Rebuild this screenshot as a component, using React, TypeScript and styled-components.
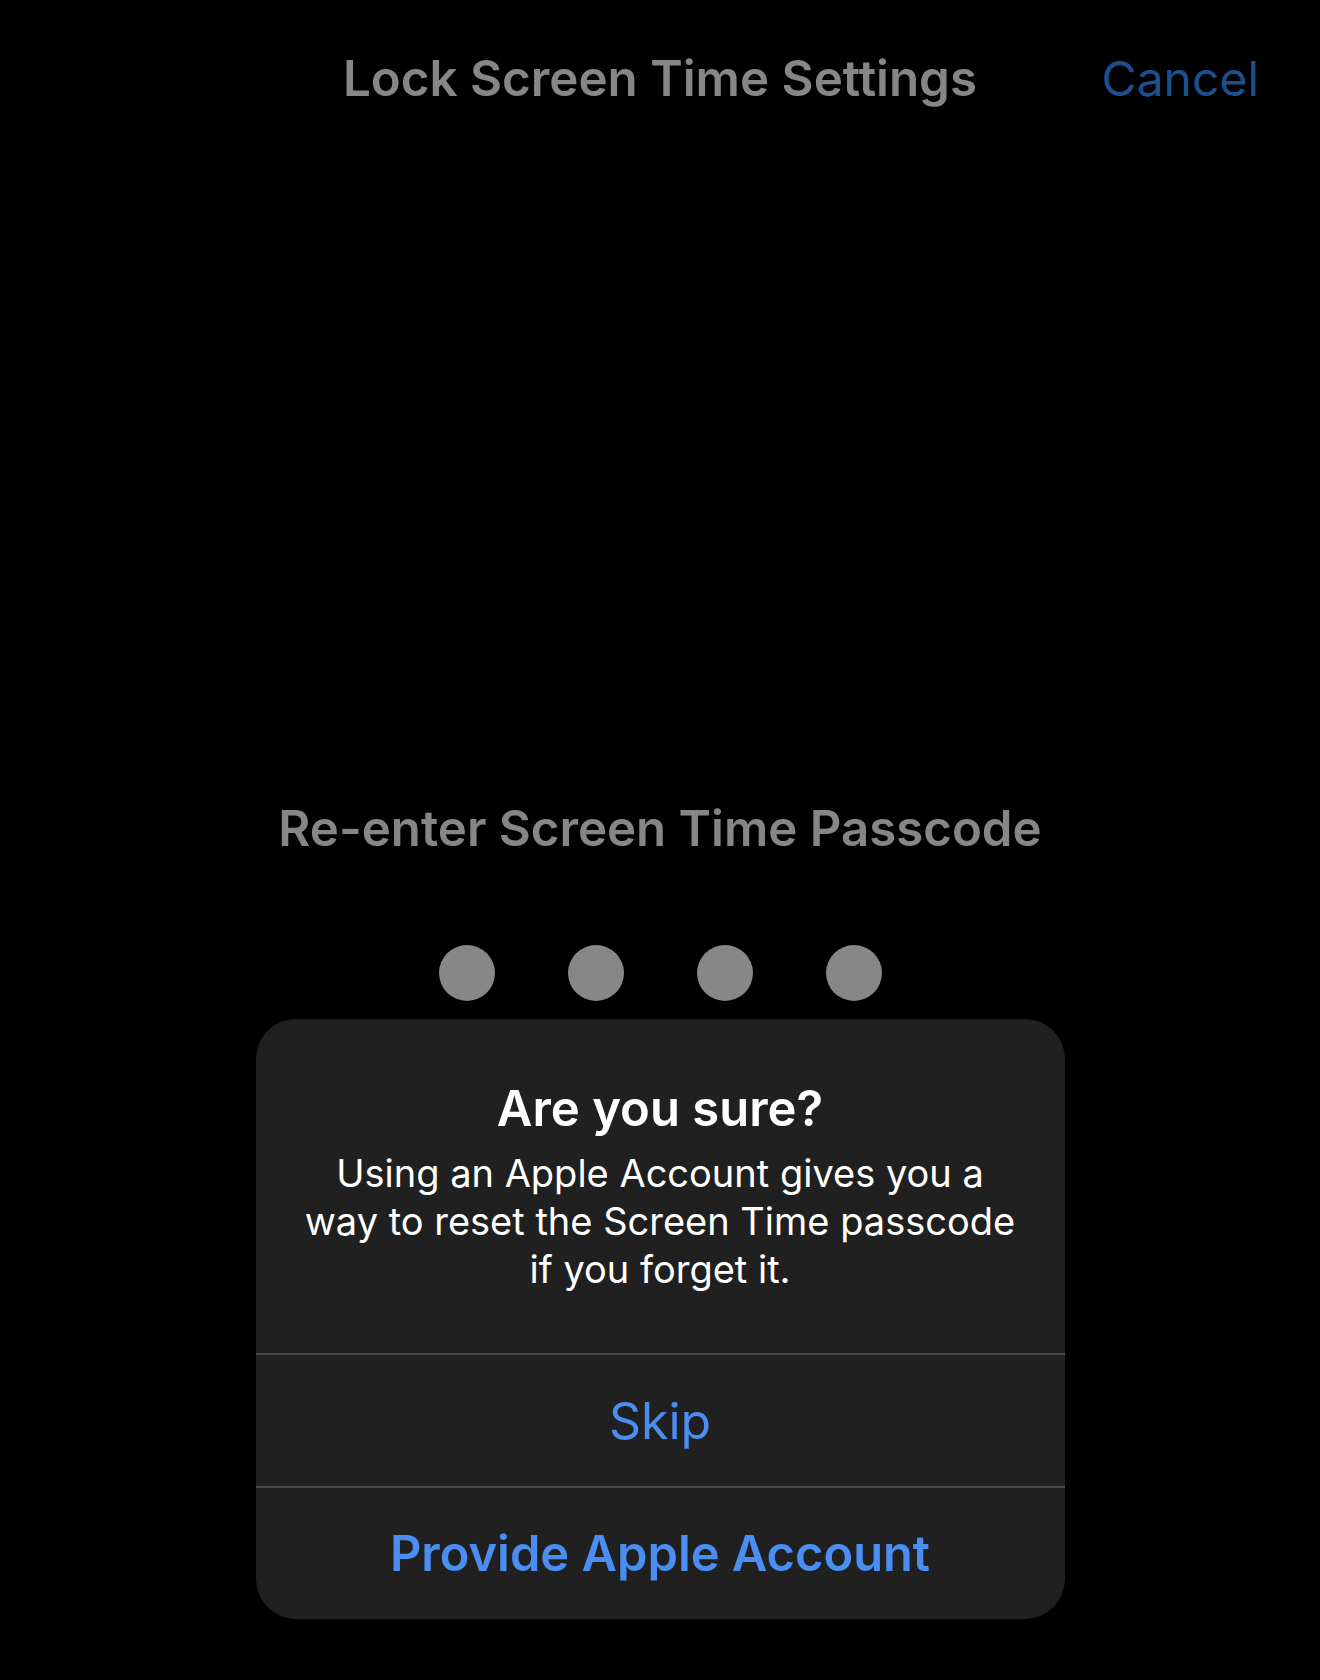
import React from 'react';
import styled, { createGlobalStyle } from 'styled-components';

const GlobalStyle = createGlobalStyle`
  html, body {
    margin: 0;
    padding: 0;
    background: #000;
  }
  body {
    font-family: Inter, "Noto Sans", "Liberation Sans", sans-serif;
    -webkit-font-smoothing: antialiased;
  }
`;

const Screen = styled.div`
  width: 1320px;
  height: 1680px;
  background: #000;
  display: flex;
  flex-direction: column;
  align-items: center;
  overflow: hidden;
`;

const NavBar = styled.header`
  width: 100%;
  height: 156px;
  display: grid;
  grid-template-columns: 1fr auto 1fr;
  align-items: center;
  box-sizing: border-box;
  padding: 0 61px;
`;

const NavTitle = styled.div`
  grid-column: 2;
  font-size: 49.3px;
  font-weight: 600;
  color: #868686;
  white-space: nowrap;
`;

const NavAction = styled.div`
  grid-column: 3;
  justify-self: end;
  font-size: 48px;
  font-weight: 400;
  color: #1d4f8d;
`;

const Prompt = styled.div`
  margin-top: 642px;
  height: 60px;
  line-height: 60px;
  font-size: 49.2px;
  font-weight: 600;
  color: #868686;
  white-space: nowrap;
`;

const Dots = styled.div`
  margin-top: 87px;
  display: flex;
  gap: 73px;
`;

const Dot = styled.span`
  width: 56px;
  height: 56px;
  border-radius: 50%;
  background: #878787;
`;

const Alert = styled.div`
  margin-top: 18px;
  width: 809px;
  border-radius: 40px;
  background: #202020;
  overflow: hidden;
  display: flex;
  flex-direction: column;
`;

const AlertBody = styled.div`
  padding: 60px 20px 60px;
  text-align: center;
  color: #fff;
`;

const AlertTitle = styled.div`
  font-size: 49px;
  font-weight: 600;
  line-height: 60px;
  margin-bottom: 10px;
`;

const AlertMessage = styled.div`
  font-size: 38px;
  font-weight: 400;
  line-height: 48px;
  white-space: nowrap;
`;

const AlertButton = styled.button<{ $primary?: boolean }>`
  height: 133px;
  border: none;
  border-top: 2px solid #4a4a4a;
  background: transparent;
  color: #4a8ef2;
  font-family: inherit;
  font-size: ${(p) => (p.$primary ? '48.8px' : '50px')};
  font-weight: ${(p) => (p.$primary ? 600 : 400)};
  padding: 0;
  cursor: pointer;
`;

const App: React.FC = () => {
  return (
    <>
      <GlobalStyle />
      <Screen>
        <NavBar>
          <NavTitle>Lock Screen Time Settings</NavTitle>
          <NavAction>Cancel</NavAction>
        </NavBar>
        <Prompt>Re-enter Screen Time Passcode</Prompt>
        <Dots>
          {[0, 1, 2, 3].map((i) => (
            <Dot key={i} />
          ))}
        </Dots>
        <Alert>
          <AlertBody>
            <AlertTitle>Are you sure?</AlertTitle>
            <AlertMessage>
              Using an Apple Account gives you a<br />
              way to reset the Screen Time passcode<br />
              if you forget it.
            </AlertMessage>
          </AlertBody>
          <AlertButton>Skip</AlertButton>
          <AlertButton $primary>Provide Apple Account</AlertButton>
        </Alert>
      </Screen>
    </>
  );
};

export default App;
